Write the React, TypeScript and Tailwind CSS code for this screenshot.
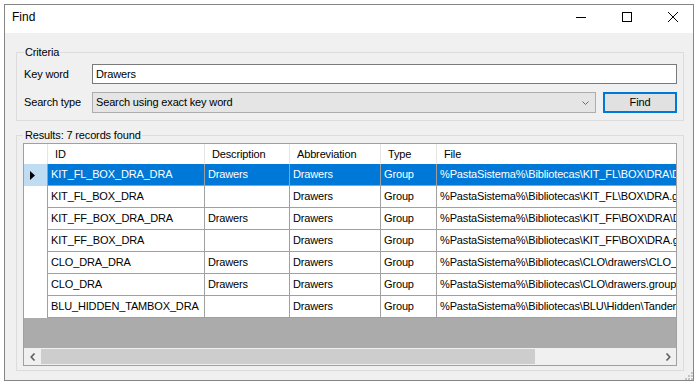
import React from "react";

type Row = { id: string; desc: string; abbr: string; type: string; file: string; sel?: boolean };

const rows: Row[] = [
  { id: "KIT_FL_BOX_DRA_DRA", desc: "Drawers", abbr: "Drawers", type: "Group", file: "%PastaSistema%\\Bibliotecas\\KIT_FL\\BOX\\DRA\\DRA.group", sel: true },
  { id: "KIT_FL_BOX_DRA", desc: "", abbr: "Drawers", type: "Group", file: "%PastaSistema%\\Bibliotecas\\KIT_FL\\BOX\\DRA.group" },
  { id: "KIT_FF_BOX_DRA_DRA", desc: "Drawers", abbr: "Drawers", type: "Group", file: "%PastaSistema%\\Bibliotecas\\KIT_FF\\BOX\\DRA\\DRA.group" },
  { id: "KIT_FF_BOX_DRA", desc: "", abbr: "Drawers", type: "Group", file: "%PastaSistema%\\Bibliotecas\\KIT_FF\\BOX\\DRA.group" },
  { id: "CLO_DRA_DRA", desc: "Drawers", abbr: "Drawers", type: "Group", file: "%PastaSistema%\\Bibliotecas\\CLO\\drawers\\CLO_DRA.group" },
  { id: "CLO_DRA", desc: "Drawers", abbr: "Drawers", type: "Group", file: "%PastaSistema%\\Bibliotecas\\CLO\\drawers.group" },
  { id: "BLU_HIDDEN_TAMBOX_DRA", desc: "", abbr: "Drawers", type: "Group", file: "%PastaSistema%\\Bibliotecas\\BLU\\Hidden\\Tandembox.group" },
];

function DataRow({ r }: { r: Row }) {
  const cell = r.sel ? "bg-[#0078d7] text-white" : "bg-white text-black";
  const base = "h-full flex items-center pl-[3px] whitespace-nowrap overflow-hidden border-b border-[#a0a0a0]";
  return (
    <div className="flex h-[22px] shrink-0">
      <div className={`w-[24px] h-full flex items-center pl-[6px] border-r border-[#a0a0a0] ${r.sel ? "bg-[#c0dcf3]" : "bg-white"}`}>
        {r.sel && (
          <svg width="6" height="9" viewBox="0 0 6 9">
            <polygon points="0,0 5,4.5 0,9" fill="#000" />
          </svg>
        )}
      </div>
      <div className={`w-[157px] border-r ${base} ${cell}`}>{r.id}</div>
      <div className={`w-[85px] border-r ${base} ${cell}`}>{r.desc}</div>
      <div className={`w-[91px] border-r ${base} ${cell}`}>{r.abbr}</div>
      <div className={`w-[56px] border-r ${base} ${cell}`}>{r.type}</div>
      <div className={`flex-1 ${base} ${cell}`}>{r.file}</div>
    </div>
  );
}

export default function App() {
  return (
    <div className="w-[698px] h-[386px] bg-white pl-[4px] pt-[4px] font-['Liberation_Sans',Arial,sans-serif] text-[11px] leading-[13px] tracking-[-0.15px] text-black">
      <div className="w-[690px] h-[377px] border border-[#858585] flex flex-col">
        {/* Title bar */}
        <div className="h-[28px] shrink-0 bg-white flex pb-[4px]">
          <div className="flex-1 flex items-center pl-[7px] text-[12px] tracking-normal">Find</div>
          <div className="w-[46px] flex items-center justify-center">
            <svg width="10" height="10" viewBox="0 0 10 10">
              <line x1="0" y1="5.5" x2="10" y2="5.5" stroke="#000" strokeWidth="1" />
            </svg>
          </div>
          <div className="w-[46px] flex items-center justify-center">
            <svg width="10" height="10" viewBox="0 0 10 10">
              <rect x="0.5" y="0.5" width="9" height="9" fill="none" stroke="#000" strokeWidth="1" />
            </svg>
          </div>
          <div className="w-[43px] flex items-center pl-[18px]">
            <svg width="10" height="10" viewBox="0 0 10 10">
              <line x1="0" y1="0" x2="10" y2="10" stroke="#000" strokeWidth="1" />
              <line x1="10" y1="0" x2="0" y2="10" stroke="#000" strokeWidth="1" />
            </svg>
          </div>
        </div>

        {/* Body */}
        <div className="relative flex-1 bg-[#f0f0f0] pl-[11px]">
          {/* Criteria */}
          <fieldset className="w-[668px] mt-[13px] border border-[#dcdcdc] pl-[7px] pr-[6px] pb-[7px]">
            <legend className="px-[1px] leading-[13px]">Criteria</legend>
            <div className="flex items-center mt-[5px] h-[20px]">
              <div className="w-[68px]">Key word</div>
              <div className="w-[585px] h-[20px] bg-white border border-[#7a7a7a] flex items-center pl-[3px]">Drawers</div>
            </div>
            <div className="flex items-center mt-[8px] h-[21px]">
              <div className="w-[68px]">Search type</div>
              <div className="w-[504px] h-[21px] bg-[#e5e5e5] border border-[#adadad] flex items-center pl-[3px] pr-[6px]">
                <span className="flex-1">Search using exact key word</span>
                <svg width="7" height="4" viewBox="0 0 7 4">
                  <polyline points="0.5,0.5 3.5,3.5 6.5,0.5" fill="none" stroke="#6a6a6a" strokeWidth="1" />
                </svg>
              </div>
              <div className="ml-[7px] w-[74px] h-[21px] bg-[#e1e1e1] border-2 border-[#0078d7] flex items-center justify-center">Find</div>
            </div>
          </fieldset>

          {/* Results */}
          <fieldset className="w-[668px] mt-[8px] border border-[#dcdcdc] pl-[6px] pr-[6px] pb-[4px]">
            <legend className="pl-[2px] pr-[1px] leading-[13px]">Results: 7 records found</legend>
            <div className="mt-[1px] w-[654px] h-[223px] border border-[#a0a0a0] bg-[#ababab] flex flex-col overflow-hidden">
              {/* header */}
              <div className="flex h-[20px] shrink-0 bg-white">
                <div className="w-[24px] h-full border-r border-[#e5e5e5]" />
                <div className="w-[157px] h-full border-r border-[#e5e5e5] flex items-center pl-[7px]">ID</div>
                <div className="w-[85px] h-full border-r border-[#e5e5e5] flex items-center pl-[7px]">Description</div>
                <div className="w-[91px] h-full border-r border-[#e5e5e5] flex items-center pl-[7px]">Abbreviation</div>
                <div className="w-[56px] h-full border-r border-[#e5e5e5] flex items-center pl-[7px]">Type</div>
                <div className="flex-1 h-full flex items-center pl-[7px]">File</div>
              </div>
              {rows.map((r) => (
                <DataRow key={r.id} r={r} />
              ))}
              <div className="flex-1" />
              {/* horizontal scrollbar */}
              <div className="h-[17px] shrink-0 flex bg-[#f0f0f0]">
                <div className="w-[17px] h-full flex items-center justify-center">
                  <svg width="6" height="8" viewBox="0 0 6 8">
                    <polyline points="4.5,0.5 1.2,4 4.5,7.5" fill="none" stroke="#606060" strokeWidth="1.6" />
                  </svg>
                </div>
                <div className="w-[494px] h-full py-[1px]">
                  <div className="w-full h-full bg-[#cdcdcd]" />
                </div>
                <div className="flex-1" />
                <div className="w-[17px] h-full flex items-center justify-center">
                  <svg width="6" height="8" viewBox="0 0 6 8">
                    <polyline points="1.5,0.5 4.8,4 1.5,7.5" fill="none" stroke="#606060" strokeWidth="1.6" />
                  </svg>
                </div>
              </div>
            </div>
          </fieldset>

          {/* size grip */}
          <svg className="absolute right-0 bottom-0" width="8" height="8" viewBox="0 0 8 8">
            <rect x="6" y="6" width="2" height="2" fill="#c4c4c4" />
            <rect x="3" y="6" width="2" height="2" fill="#c4c4c4" />
            <rect x="0" y="6" width="2" height="2" fill="#c4c4c4" />
            <rect x="6" y="3" width="2" height="2" fill="#c4c4c4" />
            <rect x="3" y="3" width="2" height="2" fill="#c4c4c4" />
            <rect x="6" y="0" width="2" height="2" fill="#c4c4c4" />
          </svg>
        </div>
      </div>
    </div>
  );
}
